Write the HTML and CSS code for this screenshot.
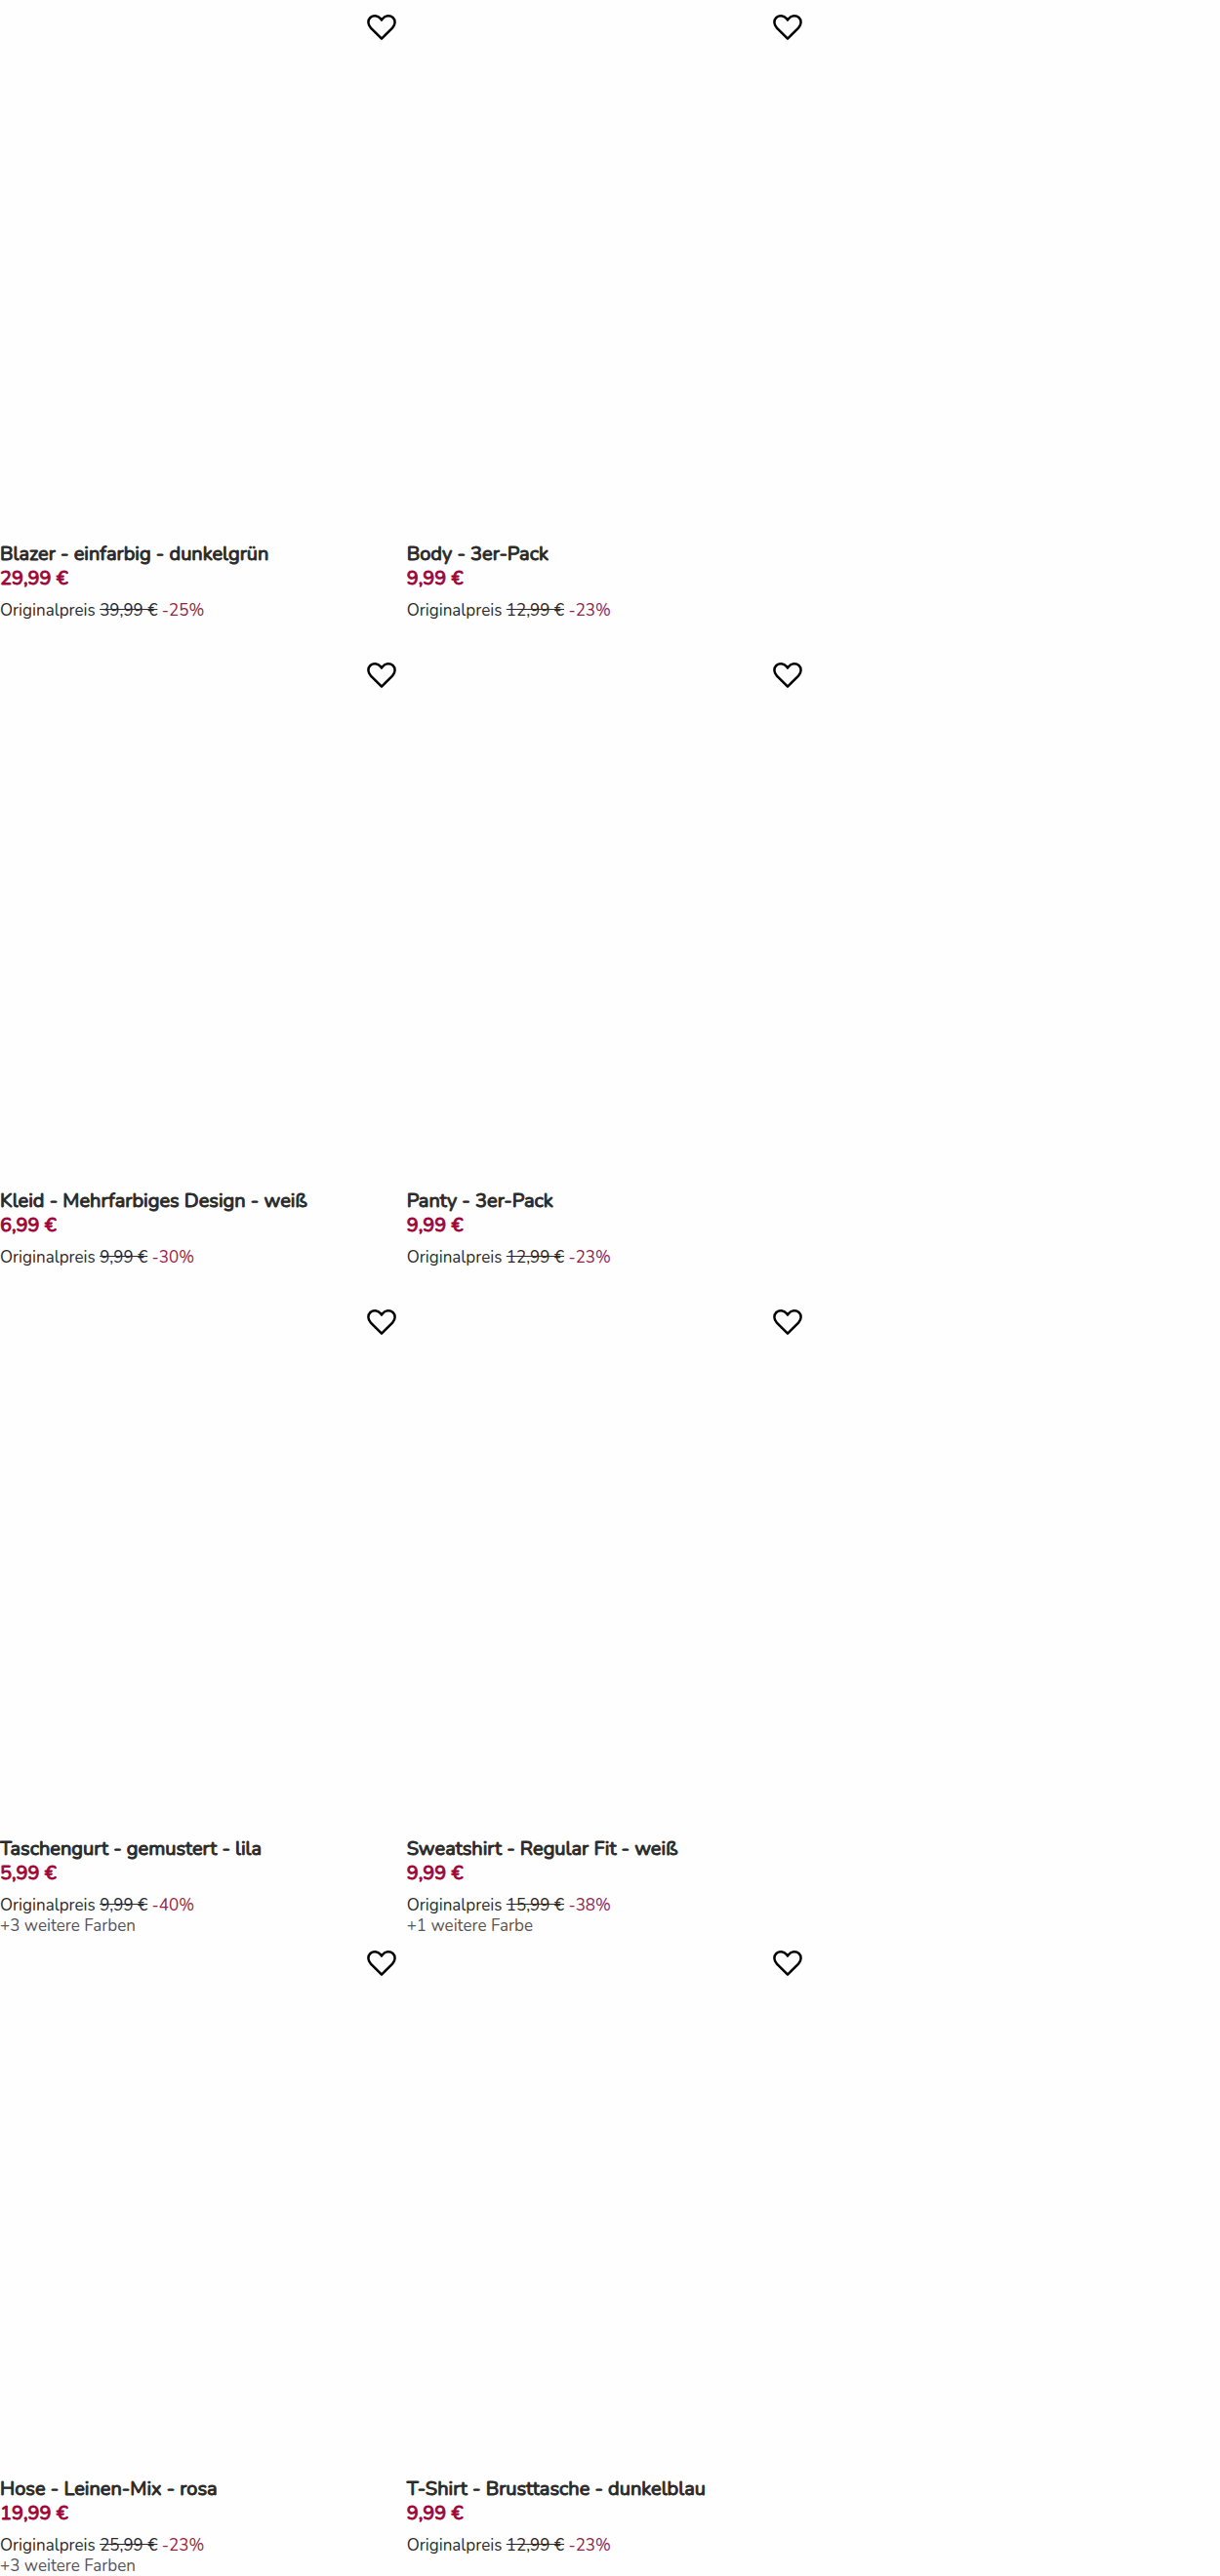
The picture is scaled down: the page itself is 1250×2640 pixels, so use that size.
FILE: index.html
```html
<!DOCTYPE html>
<html lang="de">

<head>
    <meta charset="UTF-8">
    <meta name="viewport" content="width=device-width, initial-scale=1.0">
    <title>Produkte</title>
    <link rel="stylesheet" href="styles.css">
</head>

<body>
    <!-- heart shape, used by every wishlist button -->
    <svg class="sprite" aria-hidden="true">
        <symbol id="heart" viewBox="0 0 32 28">
            <path d="M16 25.600L4.900 14.600C1.700 11.300 1.600 6.600 4.400 4C7.400 1.300 12.200 1.800 14.600 4.800L16 6.600L17.400 4.800C19.800 1.800 24.600 1.300 27.600 4C30.400 6.600 30.300 11.300 27.100 14.600Z" />
        </symbol>
    </svg>

    <main class="products">
        <article class="product">
            <div class="picture">
                <button class="wish" type="button" aria-label="Merken"><svg><use href="#heart" /></svg></button>
            </div>
            <h2 class="name">Blazer - einfarbig - dunkelgrün</h2>
            <p class="price">29,99 €</p>
            <p class="original">Originalpreis <s>39,99 €</s> <span class="discount">-25%</span></p>
        </article>
        <article class="product">
            <div class="picture">
                <button class="wish" type="button" aria-label="Merken"><svg><use href="#heart" /></svg></button>
            </div>
            <h2 class="name">Body - 3er-Pack</h2>
            <p class="price">9,99 €</p>
            <p class="original">Originalpreis <s>12,99 €</s> <span class="discount">-23%</span></p>
        </article>

        <article class="product">
            <div class="picture">
                <button class="wish" type="button" aria-label="Merken"><svg><use href="#heart" /></svg></button>
            </div>
            <h2 class="name">Kleid - Mehrfarbiges Design - weiß</h2>
            <p class="price">6,99 €</p>
            <p class="original">Originalpreis <s>9,99 €</s> <span class="discount">-30%</span></p>
        </article>
        <article class="product">
            <div class="picture">
                <button class="wish" type="button" aria-label="Merken"><svg><use href="#heart" /></svg></button>
            </div>
            <h2 class="name">Panty - 3er-Pack</h2>
            <p class="price">9,99 €</p>
            <p class="original">Originalpreis <s>12,99 €</s> <span class="discount">-23%</span></p>
        </article>

        <article class="product">
            <div class="picture">
                <button class="wish" type="button" aria-label="Merken"><svg><use href="#heart" /></svg></button>
            </div>
            <h2 class="name">Taschengurt - gemustert - lila</h2>
            <p class="price">5,99 €</p>
            <p class="original">Originalpreis <s>9,99 €</s> <span class="discount">-40%</span></p>
            <p class="colors">+3 weitere Farben</p>
        </article>
        <article class="product">
            <div class="picture">
                <button class="wish" type="button" aria-label="Merken"><svg><use href="#heart" /></svg></button>
            </div>
            <h2 class="name">Sweatshirt - Regular Fit - weiß</h2>
            <p class="price">9,99 €</p>
            <p class="original">Originalpreis <s>15,99 €</s> <span class="discount">-38%</span></p>
            <p class="colors">+1 weitere Farbe</p>
        </article>

        <article class="product">
            <div class="picture">
                <button class="wish" type="button" aria-label="Merken"><svg><use href="#heart" /></svg></button>
            </div>
            <h2 class="name">Hose - Leinen-Mix - rosa</h2>
            <p class="price">19,99 €</p>
            <p class="original">Originalpreis <s>25,99 €</s> <span class="discount">-23%</span></p>
            <p class="colors">+3 weitere Farben</p>
        </article>
        <article class="product">
            <div class="picture">
                <button class="wish" type="button" aria-label="Merken"><svg><use href="#heart" /></svg></button>
            </div>
            <h2 class="name">T-Shirt - Brusttasche - dunkelblau</h2>
            <p class="price">9,99 €</p>
            <p class="original">Originalpreis <s>12,99 €</s> <span class="discount">-23%</span></p>
        </article>
    </main>
</body>

</html>
```
FILE: styles.css
```css
body {
    margin: 0;
    background-color: #fefefe;
    color: #2a2a2a;
    font-family: Nunito, Lato, sans-serif;
}

h2,
p {
    margin: 0;
}

.sprite {
    display: none;
}

/* two of three columns are filled */
.products {
    display: grid;
    grid-template-columns: repeat(2, 1fr);
    width: calc(100% * 2 / 3);
}

.picture {
    display: flex;
    justify-content: flex-end;
    align-items: flex-start;
    box-sizing: border-box;
    aspect-ratio: 3 / 4;
    padding: 6px 4px;
}

.wish {
    display: flex;
    align-items: center;
    justify-content: center;
    width: 44px;
    height: 44px;
    padding: 0;
    border: 0;
    background: none;
    cursor: pointer;
}

.wish svg {
    width: 32px;
    height: 28px;
    fill: none;
    stroke: #000;
    stroke-width: 2.5;
    stroke-linejoin: round;
}

/* regular letters with a thin outline, lighter than real bold */
.name,
.price {
    font-size: 20px;
    font-weight: normal;
    line-height: 24px;
    -webkit-text-stroke: 1px;
}

.price {
    color: #a0063a;
    line-height: 25px;
}

.original {
    margin-top: 10px;
    font-size: 17px;
    line-height: 21px;
}

/* room below cards that have no colors line */
.original:last-child {
    margin-bottom: 28px;
}

.product:last-child .original {
    margin-bottom: 0;
}

.discount {
    color: #98204a;
}

.colors {
    color: #555;
    font-size: 17px;
    line-height: 21px;
}
```
